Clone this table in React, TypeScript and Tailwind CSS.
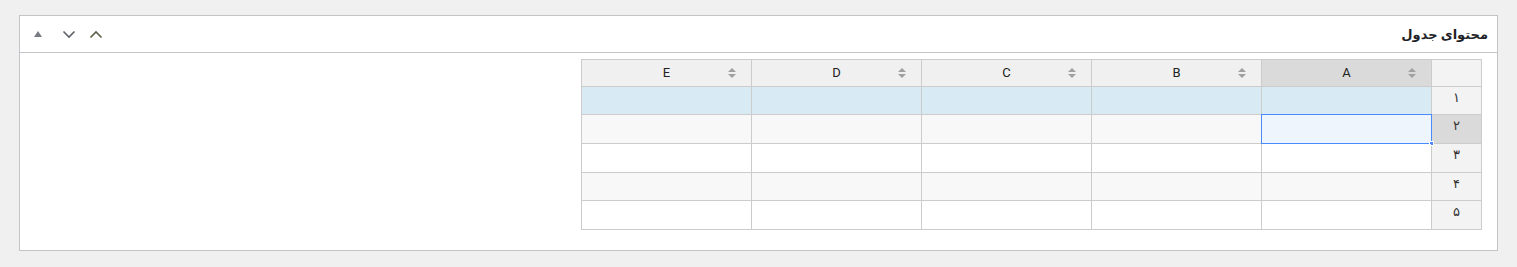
import React from 'react';

const cols = ['A', 'B', 'C', 'D', 'E'];

const rows = [
  { label: '۱', h: 'h-[28px]', bg: 'bg-[#d8ebf5]' },
  { label: '۲', h: 'h-[29px]', bg: 'bg-[#f8f8f8]', selected: true },
  { label: '۳', h: 'h-[29px]', bg: 'bg-white' },
  { label: '۴', h: 'h-[28px]', bg: 'bg-[#f8f8f8]' },
  { label: '۵', h: 'h-[29px]', bg: 'bg-white' },
];

const SortIcon = () => (
  <svg width="10" height="12" viewBox="0 0 10 12" className="fill-[#a0a0a0]">
    <path d="M5 1 L9 5 L1 5 Z" />
    <path d="M5 11 L9 7 L1 7 Z" />
  </svg>
);

const Chevron = ({ up }: { up?: boolean }) => (
  <svg width="14" height="9" viewBox="0 0 14 9" fill="none" stroke={up ? '#5c5f4a' : '#5f6168'} strokeWidth="1.6">
    {up ? <path d="M1.5 7.5 L7 2 L12.5 7.5" /> : <path d="M1.5 1.5 L7 7 L12.5 1.5" />}
  </svg>
);

export default function App() {
  return (
    <div
      dir="rtl"
      className="bg-[#f0f0f1] h-[267px] pt-[15px] px-[19px]"
      style={{ fontFamily: "Roboto, 'DejaVu Sans', sans-serif" }}
    >
      <div className="bg-white border border-[#c3c4c7]">
        <div className="h-[37px] flex items-center justify-between border-b border-[#c3c4c7] pr-[9px]">
          <h2 className="text-[13px] font-bold text-[#1d2327] leading-none">محتوای جدول</h2>
          <div className="flex items-center h-full">
            <button className="w-[28px] h-full flex items-center justify-center">
              <Chevron up />
            </button>
            <button className="w-[26px] h-full flex items-center justify-center">
              <Chevron />
            </button>
            <button className="w-[36px] h-full flex items-center justify-center">
              <svg width="8" height="6" viewBox="0 0 8 6" className="fill-[#787c82]">
                <path d="M4 0 L8 6 L0 6 Z" />
              </svg>
            </button>
          </div>
        </div>

        <div className="pt-[6px] pr-[15px] pb-[20px]">
          <div className="w-[901px] border-t border-r border-[#cccccc] text-[13px] text-[#333]">
            <div className="flex h-[27px]">
              <div className="w-[50px] border-l border-b border-[#cccccc] bg-[#f3f3f3]" />
              {cols.map((c, i) => (
                <div
                  key={c}
                  className={`w-[170px] border-l border-b border-[#cccccc] flex items-center relative ${
                    i === 0 ? 'bg-[#dadada]' : 'bg-[#f0f0f0]'
                  }`}
                >
                  <span className="flex-1 text-center text-[#222]">{c}</span>
                  <span className="absolute right-[14px] top-[7px] flex">
                    <SortIcon />
                  </span>
                </div>
              ))}
            </div>
            {rows.map((r) => (
              <div key={r.label} className={`flex ${r.h}`}>
                <div
                  className={`w-[50px] border-l border-b border-[#cccccc] flex items-center justify-center pb-[6px] ${
                    r.selected ? 'bg-[#dadada]' : 'bg-[#f3f3f3]'
                  }`}
                >
                  {r.label}
                </div>
                {cols.map((c, i) => (
                  <div
                    key={c}
                    className={`w-[170px] border-l border-b border-[#cccccc] relative ${
                      r.selected && i === 0 ? 'bg-[#eff5fd]' : r.bg
                    }`}
                  >
                    {r.selected && i === 0 && (
                      <>
                        <div className="absolute -top-px -left-px -right-px -bottom-px border-[1.5px] border-[#4b89ff]" />
                        <div className="absolute -right-[3px] -bottom-[3px] w-[5px] h-[5px] bg-[#4b89ff] border border-white" />
                      </>
                    )}
                  </div>
                ))}
              </div>
            ))}
          </div>
        </div>
      </div>
    </div>
  );
}
